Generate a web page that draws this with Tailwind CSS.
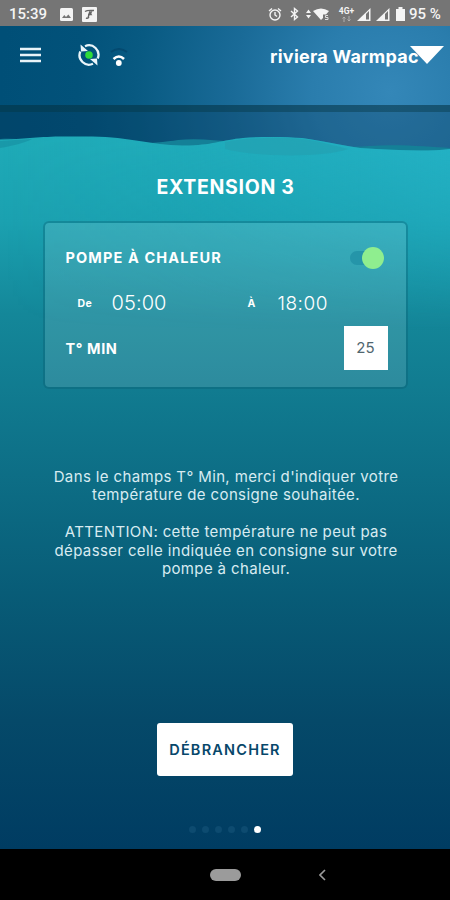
<!DOCTYPE html>
<html lang="fr">
<head>
  <meta charset="UTF-8">
  <meta name="viewport" content="width=device-width, initial-scale=1.0">
  <title>Extension 3 - riviera Warmpac</title>
  <script src="https://cdn.jsdelivr.net/npm/@tailwindcss/browser@4"></script>
</head>

<body class="bg-black font-['Inter',sans-serif] text-white">
  <div class="relative isolate flex h-[900px] w-[450px] flex-col overflow-hidden">

    <!-- Fond : ciel et vagues -->
    <svg class="absolute inset-0 -z-10" width="450" height="900" viewBox="0 0 450 900">
      <defs>
        <radialGradient id="ciel" gradientUnits="userSpaceOnUse" cx="390" cy="92" r="390">
          <stop offset="0" stop-color="#3487b8" />
          <stop offset=".2" stop-color="#2a7dad" />
          <stop offset=".4" stop-color="#1a6b98" />
          <stop offset=".65" stop-color="#085a82" />
          <stop offset=".8" stop-color="#02527a" />
          <stop offset="1" stop-color="#004f77" />
        </radialGradient>
        <linearGradient id="mer" gradientUnits="userSpaceOnUse" x1="0" y1="136" x2="0" y2="849">
          <stop offset="0" stop-color="#1fabb8" />
          <stop offset=".12" stop-color="#1ba1b0" />
          <stop offset=".25" stop-color="#148799" />
          <stop offset=".44" stop-color="#0e7289" />
          <stop offset=".64" stop-color="#085c77" />
          <stop offset=".82" stop-color="#054969" />
          <stop offset="1" stop-color="#003c62" />
        </linearGradient>
        <linearGradient id="eclat" x1="0" y1="0" x2="1" y2="0">
          <stop offset="0" stop-color="#23b3cc" stop-opacity="0" />
          <stop offset=".35" stop-color="#23b3cc" stop-opacity=".12" />
          <stop offset="1" stop-color="#27b7cf" stop-opacity=".6" />
        </linearGradient>
        <linearGradient id="fondu" x1="0" y1="0" x2="0" y2="1">
          <stop offset="0" stop-color="#fff" />
          <stop offset="1" stop-color="#000" />
        </linearGradient>
        <mask id="haut"><rect y="130" width="450" height="200" fill="url(#fondu)" /></mask>
      </defs>
      <rect width="450" height="180" fill="url(#ciel)" />
      <rect y="105" width="450" height="60" fill="#04304e" fill-opacity=".28" />
      <rect y="105" width="450" height="7" fill="#06343f" fill-opacity=".4" />
      <path d="M0 139C30 138 60 143 90 142C130 145 160 143 178 140C195 138 215 140 235 142C280 152 330 148 370 146C400 144 430 147 450 148V170H0Z" fill="#148097" />
      <path d="M0 140C25 139 35 137 60 136.5H92C130 137 150 145 182 145.500C210 146 222 140 243 138C260 136.500 285 136.500 302 138C325 141 338 145 360 148C395 150 425 152 450 149V900H0Z" fill="url(#mer)" />
      <g mask="url(#haut)"><path d="M0 140C25 139 35 137 60 136.5H92C130 137 150 145 182 145.500C210 146 222 140 243 138C260 136.500 285 136.500 302 138C325 141 338 145 360 148C395 150 425 152 450 149V330H0Z" fill="url(#eclat)" /></g>
      <path d="M225 142C250 137 290 136 315 141C325 143 337 146 348 149C325 158 255 157 225 149Z" fill="#24a0b1" fill-opacity=".65" />
      <path d="M0 141L32 139C25 143 12 146 0 148Z" fill="#168da0" fill-opacity=".6" />
    </svg>

    <!-- Barre d'état -->
    <div class="flex h-[26px] shrink-0 items-center bg-[#757575] pt-0.5 pr-[8px] pl-[9px] font-[Roboto,sans-serif] text-[15px] font-medium text-[#f4f4f4]">
      <span class="w-[51px]">15:39</span>
      <svg width="13" height="13" viewBox="0 0 13 13"><rect width="13" height="13" rx="1.500" fill="#f4f4f4" /><path d="M2 10L4.300 7L6 9L8.400 6.500L11 10Z" fill="#757575" /></svg>
      <span class="ml-[9px] flex size-[15px] items-center justify-center rounded-[1px] bg-[#f4f4f4]">
        <svg width="13" height="13" viewBox="0 0 13 13" fill="none" stroke="#666"><path d="M2 3.500Q4 2 11 2.500M7 3L5 10M9 3Q7 5 8 6.500H5M3 10Q5 11 6 9" stroke-width="1.400" /></svg>
      </span>
      <svg class="ml-auto" width="14" height="15" viewBox="0 0 14 15" fill="none" stroke="#f4f4f4" stroke-width="1.400"><circle cx="7" cy="8" r="5" /><path d="M1 4L4 1.500M13 4L10 1.500M7 5V8L9 9.500" /></svg>
      <svg class="ml-[8px]" width="9" height="14" viewBox="0 0 9 14" fill="none" stroke="#f4f4f4" stroke-width="1.400"><path d="M1 4L7.500 10L4.500 12.500V1.500L7.500 4L1 10" /></svg>
      <svg class="ml-[7px]" width="24" height="14" viewBox="0 0 24 14" fill="#f4f4f4"><path d="M0 6L2.500 2.500L5 6ZM0 8H5L2.500 11.500ZM7 4Q15-1 23 4L20 7.500H17V11L15 13Z" /><path d="M22 8.500H19.500V10.500H22V12.500H19" fill="none" stroke="#ddd" /></svg>
      <span class="ml-[8px] flex w-[17px] flex-col items-center text-[8.500px] leading-[9px] font-bold">
        <span>4G+</span>
        <svg width="9" height="6" viewBox="0 0 9 6" fill="none" stroke="#b0b0b0"><path d="M2 6V1M.5 2.500L2 1L3.500 2.500M7 0V5M5.500 3.500L7 5L8.500 3.500" /></svg>
      </span>
      <svg class="ml-[2px]" width="14" height="13" viewBox="0 0 14 13"><path d="M0 13L13.500 0V13Z" fill="#f4f4f4" /><path d="M9 6L12 3V11.500H9Z" fill="#757575" /></svg>
      <svg class="ml-[5px]" width="14" height="13" viewBox="0 0 14 13"><path d="M0 13L13.500 0V13Z" fill="#f4f4f4" /><path d="M9 6L12 3V11.500H9Z" fill="#757575" /></svg>
      <svg class="ml-[6px]" width="9" height="14" viewBox="0 0 9 14" fill="#f4f4f4"><path d="M0 2H2.500V0H6.500V2H9V14H0Z" /></svg>
      <span class="ml-[4px] w-[33px] whitespace-nowrap">95 %</span>
    </div>

    <!-- En-tête -->
    <header class="flex h-[60px] shrink-0 items-center pl-5">
      <svg class="-mt-0.5" width="21" height="16" viewBox="0 0 21 16" stroke="#e9f3f8" stroke-width="2.400"><path d="M0 2H21M0 8H21M0 14H21" /></svg>
      <svg class="-mt-0.5 ml-[36px]" width="24" height="24" viewBox="0 0 24 24" fill="none" stroke="#eaf5fa" stroke-width="2.300">
        <path d="M8 3.200A9.500 9.500 0 0 1 20.700 15.500" />
        <path d="M16 20.800A9.500 9.500 0 0 1 3.300 8.500" />
        <path d="M3.500 1.500L4 8.500L11 8ZM20.500 22.500L20 15.500L13 16Z" fill="#eaf5fa" stroke="none" />
        <circle cx="12" cy="12" r="3.800" fill="#2fdb3a" stroke="none" />
      </svg>
      <svg class="mt-[3px] ml-[9px]" width="18" height="20" viewBox="0 0 18 20" fill="none">
        <path d="M1 4Q9-2 17 4" stroke="#044a70" stroke-width="2" />
        <path d="M3.500 11Q9 6 14 11" stroke="#fff" stroke-width="2.500" />
        <circle cx="8.800" cy="15" r="2.900" fill="#fff" />
      </svg>
      <span class="ml-[142px] w-[140px] text-[18px] font-bold tracking-[0.250px] whitespace-nowrap">riviera Warmpac</span>
      <svg class="mb-0.5 shrink-0" width="34" height="18" viewBox="0 0 34 18"><path d="M0 0H34L17 18Z" fill="#fff" /></svg>
    </header>

    <!-- Contenu -->
    <main class="flex grow flex-col items-center">
      <h1 class="mt-[87px] pl-px text-[19.500px] leading-7 font-bold tracking-[0.700px]">EXTENSION 3</h1>

      <section class="mt-[20px] h-[168px] w-[365px] rounded-[6px] border-2 border-[#085b70]/35 bg-white/12 bg-clip-padding px-[21px]">
        <div class="mt-[24px] flex h-[22px] items-center justify-between">
          <h2 class="text-[14.500px] font-bold tracking-[1.120px]">POMPE À CHALEUR</h2>
          <div class="mr-[1px] flex h-[14px] w-[34px] items-center justify-end rounded-full bg-[#2595a9]">
            <span class="size-[22px] shrink-0 rounded-full bg-[#8fee8f]"></span>
          </div>
        </div>
        <div class="mt-[20px] flex h-[50px] items-start pl-[12px]">
          <span class="w-[34px] pt-[7px] text-[10.500px] leading-4 font-bold tracking-[0.400px]">De</span>
          <span class="w-[136px] text-[20px] leading-7 font-light tracking-[0.100px]">05:00</span>
          <span class="w-[30px] pt-[7px] text-[10.500px] leading-4 font-bold">À</span>
          <span class="pt-px text-[19px] leading-7 font-light tracking-[0.500px]">18:00</span>
        </div>
        <div class="-mt-[13px] flex items-center justify-between">
          <h2 class="pt-px text-[14.500px] font-bold tracking-[0.600px]">T° MIN</h2>
          <span class="-mr-[3px] flex h-[44px] w-[44px] items-center justify-center bg-white text-[15px] text-[#50666f]">25</span>
        </div>
      </section>

      <p class="mt-[79px] pl-0.5 text-center text-[15px] leading-[18.400px] tracking-[0.370px] text-[#d8ebf1]">
        Dans le champs T° Min, merci d'indiquer votre<br>
        température de consigne souhaitée.<br><br>
        ATTENTION: cette température ne peut pas<br>
        dépasser celle indiquée en consigne sur votre<br>
        pompe à chaleur.
      </p>

      <button class="mt-[145px] h-[53px] w-[136px] rounded-[3px] bg-white text-[14.500px] font-semibold tracking-[1.200px] text-[#07476a]">DÉBRANCHER</button>

      <div class="mt-[50px] mr-px flex items-center gap-[6px]">
        <span class="size-[7px] rounded-full bg-[#0d4b70]"></span>
        <span class="size-[7px] rounded-full bg-[#0d4b70]"></span>
        <span class="size-[7px] rounded-full bg-[#0d4b70]"></span>
        <span class="size-[7px] rounded-full bg-[#0d4b70]"></span>
        <span class="size-[7px] rounded-full bg-[#0d4b70]"></span>
        <span class="size-[7px] rounded-full bg-white"></span>
      </div>
    </main>

    <!-- Navigation Android -->
    <nav class="flex h-[51px] shrink-0 items-center bg-black pl-[210px]">
      <span class="h-[12px] w-[31px] rounded-full bg-[#9b9b9b]"></span>
      <svg class="ml-[78px]" width="7" height="12" viewBox="0 0 7 12" fill="none" stroke="#9b9b9b" stroke-width="1.600"><path d="M6 1L1 6L6 11" /></svg>
    </nav>
  </div>
</body>
</html>
